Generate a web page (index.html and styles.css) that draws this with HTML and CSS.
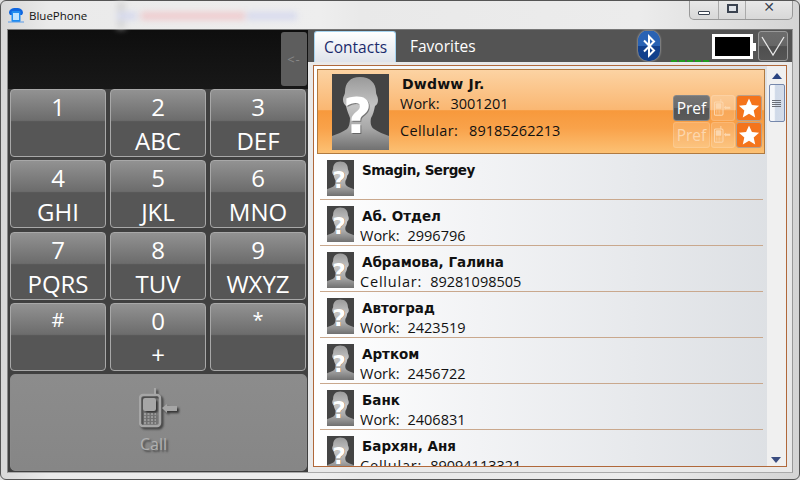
FILE: index.html
```html
<!DOCTYPE html>
<html lang="en">
<head>
<meta charset="utf-8">
<title>BluePhone</title>
<link rel="stylesheet" href="styles.css">
</head>
<body>
<svg class="defs" width="0" height="0">
  <defs>
    <linearGradient id="bust" x1="0" y1="0" x2="0" y2="1">
      <stop offset="0" stop-color="#9a9a9a"/><stop offset=".4" stop-color="#c4c4c4"/><stop offset=".7" stop-color="#a8a8a8"/><stop offset="1" stop-color="#707070"/>
    </linearGradient>
    <filter id="soft" x="-10%" y="-10%" width="120%" height="120%"><feGaussianBlur stdDeviation=".7"/></filter>
    <symbol id="avatar" viewBox="0 0 57 76">
      <rect width="57" height="76" fill="#444"/>
      <path d="M28 3c-10 0-15 6-15 15 0 3-2 4-2 8 0 3 2 5 3 6 1 5 3 9 4 12 0 5-1 9-3 11-4 3-10 5-15 7v14h57V62c-5-2-11-4-15-7-3-2-4-6-3-11 2-3 3-7 4-12 2-1 3-3 3-6 0-4-2-5-2-8 0-9-6-15-16-15z" fill="url(#bust)" filter="url(#soft)"/>
      <text x="26.500" y="60" class="avatar-q-shadow" text-anchor="middle">?</text>
      <text x="25.500" y="59" class="avatar-q" text-anchor="middle">?</text>
    </symbol>
    <symbol id="phone" viewBox="0 0 42 42">
      <path d="M16 0v8" stroke="currentColor" stroke-width="2" fill="none"/>
      <rect x="1" y="7" width="20" height="31" rx="3" fill="none" stroke="currentColor" stroke-width="2.4"/>
      <rect x="4" y="10" width="13" height="13" rx="2" fill="currentColor"/>
      <path d="M5 26h12M5 29h12M5 32h12M5 35h12" stroke="currentColor" stroke-width="1.4" stroke-dasharray="2 1.5"/>
      <path d="M23 20l5-4v2h10v5H28v2z" fill="currentColor"/>
    </symbol>
    <symbol id="star" viewBox="0 0 24 24">
      <path d="M12 1.500l3.200 7.200 7.800.8-5.900 5.200 1.700 7.700L12 18.400l-6.800 4 1.700-7.700L1 9.500l7.800-.8z" fill="#fff"/>
    </symbol>
  </defs>
</svg>
<div class="window">
  <header class="titlebar">
    <div class="title-left">
      <svg class="app-icon" viewBox="0 0 16 16" width="16" height="16"><path d="M1 6c0-3 2-5 7-5s7 2 7 5l-1 2h-2V5H4v3H2z" fill="#0f66e0"/><rect x="3.500" y="4" width="9" height="11" rx="1" fill="#1f8cf0"/><rect x="5" y="6" width="6" height="7" fill="#bfe3ff"/><path d="M0 15h16" stroke="#5a9be8"/></svg>
      <span class="title-text">BluePhone</span>
    </div>
    <div class="bleed" aria-hidden="true"><i class="bleed-shade"></i><i class="bleed-blue"></i><i class="bleed-red"></i><i class="bleed-blue2"></i></div>
    <div class="caption-btns">
      <span class="cap cap-min"><i class="glyph-min"></i></span>
      <span class="cap cap-max"><i class="glyph-max"></i></span>
      <span class="cap cap-close"><span class="glyph-x">✕</span></span>
    </div>
  </header>
  <main class="client">
    <section class="dialer">
      <div class="display"><button class="back">&lt;-</button></div>
      <div class="keys">
        <div class="key"><span class="digit">1</span><span class="letters"></span></div>
        <div class="key"><span class="digit">2</span><span class="letters">ABC</span></div>
        <div class="key"><span class="digit">3</span><span class="letters">DEF</span></div>
        <div class="key"><span class="digit">4</span><span class="letters">GHI</span></div>
        <div class="key"><span class="digit">5</span><span class="letters">JKL</span></div>
        <div class="key"><span class="digit">6</span><span class="letters">MNO</span></div>
        <div class="key"><span class="digit">7</span><span class="letters">PQRS</span></div>
        <div class="key"><span class="digit">8</span><span class="letters">TUV</span></div>
        <div class="key"><span class="digit">9</span><span class="letters">WXYZ</span></div>
        <div class="key"><span class="digit digit-small">#</span><span class="letters"></span></div>
        <div class="key"><span class="digit">0</span><span class="letters">+</span></div>
        <div class="key"><span class="digit digit-small">*</span><span class="letters"></span></div>
      </div>
      <button class="call">
        <svg class="call-icon" width="42" height="42"><use href="#phone"/></svg>
        <span class="call-label">Call</span>
      </button>
    </section>
    <section class="contacts">
      <div class="tabbar">
        <div class="tabs">
          <span class="tab tab-active">Contacts</span>
          <span class="tab">Favorites</span>
        </div>
        <div class="status">
          <svg class="bt" viewBox="0 0 22 30" width="22" height="30"><rect width="22" height="30" rx="10" fill="#12408c"/><path d="M0 15V10A10 10 0 0 1 22 10v5z" fill="#2a63b4"/><path d="M6 9.500l10 10-5 5V5.500l5 5-10 10" stroke="#fff" stroke-width="2" fill="none"/></svg>
          <div class="signal"><i></i><i></i><i></i><i></i><i></i></div>
          <div class="battery"><div class="battery-body"></div><div class="battery-tip"></div></div>
          <button class="chevron"><svg viewBox="0 0 28 28" width="28" height="28"><path d="M3 5l11 18L25 5" stroke="#e8e8e8" stroke-width="1.300" fill="none"/></svg></button>
        </div>
      </div>
      <div class="listbox">
        <div class="rows">
          <article class="row-selected">
            <svg class="avatar-large" width="57" height="76"><use href="#avatar"/></svg>
            <div class="sel-info">
              <div class="sel-name">Dwdww Jr.</div>
              <div class="sel-line"><span>Work:</span><span>3001201</span></div>
              <div class="sel-line"><span class="cell">Cellular:</span><span>89185262213</span></div>
            </div>
            <div class="actions">
              <span class="act act-pref">Pref</span>
              <span class="act act-ghost"><svg width="18" height="18"><use href="#phone"/></svg></span>
              <span class="act act-star"><svg width="22" height="22"><use href="#star"/></svg></span>
              <span class="act act-pref-ghost">Pref</span>
              <span class="act act-ghost"><svg width="18" height="18"><use href="#phone"/></svg></span>
              <span class="act act-star"><svg width="22" height="22"><use href="#star"/></svg></span>
            </div>
          </article>
          <article class="row"><svg class="avatar" width="27" height="36"><use href="#avatar"/></svg><div class="info"><div class="name name-latin">Smagin, Sergey</div></div></article>
          <article class="row"><svg class="avatar" width="27" height="36"><use href="#avatar"/></svg><div class="info"><div class="name">Аб. Отдел</div><div class="line"><span>Work:</span><span>2996796</span></div></div></article>
          <article class="row"><svg class="avatar" width="27" height="36"><use href="#avatar"/></svg><div class="info"><div class="name">Абрамова, Галина</div><div class="line"><span class="cell">Cellular:</span><span>89281098505</span></div></div></article>
          <article class="row"><svg class="avatar" width="27" height="36"><use href="#avatar"/></svg><div class="info"><div class="name">Автоград</div><div class="line"><span>Work:</span><span>2423519</span></div></div></article>
          <article class="row"><svg class="avatar" width="27" height="36"><use href="#avatar"/></svg><div class="info"><div class="name">Артком</div><div class="line"><span>Work:</span><span>2456722</span></div></div></article>
          <article class="row"><svg class="avatar" width="27" height="36"><use href="#avatar"/></svg><div class="info"><div class="name">Банк</div><div class="line"><span>Work:</span><span>2406831</span></div></div></article>
          <article class="row"><svg class="avatar" width="27" height="36"><use href="#avatar"/></svg><div class="info"><div class="name">Бархян, Аня</div><div class="line"><span class="cell">Cellular:</span><span>89094113321</span></div></div></article>
        </div>
        <div class="scrollbar">
          <span class="arrow-up"></span>
          <span class="thumb"><i></i><i></i><i></i><i></i></span>
          <span class="arrow-down"></span>
        </div>
      </div>
    </section>
  </main>
</div>
</body>
</html>
```
FILE: styles.css
```css
* { box-sizing: border-box; }
html, body { margin: 0; padding: 0; }
body { width: 800px; height: 480px; overflow: hidden; background: #ddd; font-family: "Open Sans", "Noto Sans", sans-serif; }
.defs { display: block; height: 0; }
button { font-family: inherit; padding: 0; margin: 0; }

.window {
  width: 800px; height: 480px; display: flex; flex-direction: column;
  border: 1px solid #555; border-radius: 6px 6px 6px 6px;
  background: linear-gradient(90deg, #d8d8d8 0, #eaeaea 6%, #eee 40%, #e9e9e9 45%, #ececec 80%, #d4d4d4 100%);
}
.titlebar { height: 28px; flex: none; display: flex; justify-content: space-between; padding: 0 6px 0 7px; position: relative; }
.title-left { display: flex; align-items: center; gap: 5px; height: 28px; }
.title-text { font: 11.500px "Open Sans", sans-serif; color: #111; }
.app-icon { display: block; }
.bleed { position: absolute; left: 0; top: 0; width: 400px; height: 28px; overflow: hidden; pointer-events: none; filter: blur(3px); opacity: .75; }
.bleed i { position: absolute; display: block; }
.bleed-shade { left: 116px; top: 0; width: 8px; height: 28px; background: #d0d0d0; }
.bleed-blue { left: 116px; top: 11px; width: 20px; height: 8px; background: #d0d4ee; }
.bleed-red { left: 140px; top: 11px; width: 104px; height: 8px; background: #f0c0c4; }
.bleed-blue2 { left: 246px; top: 11px; width: 50px; height: 8px; background: #d0d4ee; }
.caption-btns { display: flex; height: 19px; border: 1px solid #999; border-top: 0; border-radius: 0 0 5px 5px; background: linear-gradient(#e8e8e8, #d8d8d8); }
.cap { height: 18px; display: flex; align-items: center; justify-content: center; border-left: 1px solid #aaa; color: #333; }
.cap-min { width: 28px; border-left: 0; }
.cap-max { width: 27px; }
.cap-close { width: 47px; }
.glyph-min { width: 12px; height: 4px; margin-top: 5px; background: #fff; border: 1px solid #3b4350; border-radius: 1px; }
.glyph-max { width: 11px; height: 9px; margin-top: -4px; background: #dfe3e8; border: 2px solid #3b4350; }
.glyph-x { font: bold 14px "DejaVu Sans", sans-serif; color: #3b4350; text-shadow: 0 0 1px #fff; margin-top: -7px; }

.client { flex: 1; display: flex; margin: 0 6px 6px; min-height: 0; border: 1px solid #777; border-bottom-color: #aaa; border-right-color: #999; border-left-color: #888; }

.dialer { width: 300px; flex: none; background: #404040; display: flex; flex-direction: column; }
.display { height: 59px; flex: none; display: flex; justify-content: flex-end; padding: 2px 1px 0 0; align-items: flex-start; background: linear-gradient(#0e0e0e, #181818); }
.back { width: 26px; height: 54px; border: 0; border-radius: 3px; background: #5d5d5d; color: #888; font-size: 13px; letter-spacing: 1px; }
.keys { display: grid; grid-template-columns: repeat(3, 96px); grid-auto-rows: 68px; column-gap: 4px; row-gap: 3.330px; padding: 0 2px; }
.key {
  border: 1px solid #a8a8a8; border-radius: 4px; color: #fff; display: flex; flex-direction: column; align-items: center;
  background: linear-gradient(#929292 0, #6c6c6c 46%, #565656 48%, #565656 100%);
}
.digit { height: 33px; font-size: 24px; line-height: 33px; }
.digit-small { font-size: 20px; line-height: 31px; }
.letters { height: 33px; font-size: 24px; line-height: 36px; }
.call {
  height: 97px; flex: none; margin: 3px 1px 3px 2px; border: 1px solid #8a8a8a; border-radius: 5px;
  background: linear-gradient(#8c8c8c, #868686); color: #a6a6a6; display: flex; flex-direction: column; align-items: center; padding: 13px 0 0 0;
}
.call-icon { display: block; filter: drop-shadow(2px 2px 1px #333); margin-left: 2px; }
.call-label { font-size: 16px; line-height: 20px; margin: 4px 10px 0 0; color: #b0b0b0; text-shadow: 2px 2px 2px #444; }

.contacts { flex: 1; min-width: 0; display: flex; flex-direction: column; background: #e9e9e9; }
.tabbar { height: 32px; flex: none; background: #545454; display: flex; justify-content: space-between; padding: 1px 4px 0 6px; }
.tabs { display: flex; }
.tab { font-size: 15.500px; line-height: 30px; color: #fff; padding: 0 14px; height: 31px; }
.tab-active { color: #1a2a6c; background: linear-gradient(#fff, #dfe3ea); border: 1px solid #a6d4f0; border-bottom: 0; border-radius: 3px 3px 0 0; padding: 0 9px; width: 82px; }
.status { display: flex; align-items: flex-start; }
.bt { margin-right: 11px; display: block; filter: drop-shadow(0 0 1px #ccc); }
.signal { display: flex; gap: 2px; width: 38px; margin: 29px 3px 0 0; }
.signal i { width: 6px; height: 2px; background: #1f9a1f; }
.battery { display: flex; align-items: center; margin: 3px 2px 0 0; }
.battery-body { width: 41px; height: 25px; background: #000; border: 3px solid #fff; }
.battery-tip { width: 3px; height: 8px; background: #fff; }
.chevron { width: 30px; height: 30px; border: 1px solid #999; border-radius: 3px; background: linear-gradient(#6c6c6c 0, #666 50%, #4f4f4f 52%, #555 100%); display: flex; align-items: center; justify-content: center; }
.chevron svg { display: block; }

.listbox { flex: 1; min-height: 0; margin: 3px 5px 5px 5px; border: 1px solid #b0683a; display: flex; background: linear-gradient(90deg, #fff 0, #f2f3f5 35%, #dcdfe3 100%); }
.rows { flex: 1; min-width: 0; overflow: hidden; padding: 3px 0 0 3px; }
.scrollbar { width: 19px; flex: none; background: #f0f0f0; display: flex; flex-direction: column; align-items: center; position: relative; padding-top: 7px; }
.arrow-up { width: 0; height: 0; border: 5px solid transparent; border-top: 0; border-bottom: 6px solid #2a4480; }
.thumb { width: 16px; height: 38px; margin-top: 5px; border: 1px solid #7587ab; border-radius: 2px; background: linear-gradient(90deg, #f5f7fa 0, #f5f7fa 30%, #cfd9e8 40%, #d4dcea 100%); display: flex; flex-direction: column; align-items: center; justify-content: center; gap: 1px; }
.thumb i { width: 9px; height: 1px; background: #6b6f78; }
.arrow-down { position: absolute; bottom: 3px; left: 4px; width: 0; height: 0; border: 5px solid transparent; border-bottom: 0; border-top: 6px solid #3b4d80; }

.row-selected { height: 85px; width: 448px; display: flex; border: 1px solid #b07a40; background: linear-gradient(#fcd3a3 0, #fab772 48%, #f7993c 49%, #f9a24a 70%, #fcc174 100%); padding: 4px 0 0 14px; position: relative; }
.avatar-large { display: block; flex: none; }
.sel-info { margin-left: 11px; flex: 1; color: #111; }
.sel-name { font: bold 14px/20px "DejaVu Sans", sans-serif; padding: 0 0 0 2px; letter-spacing: .2px; }
.sel-line { font-size: 14.500px; line-height: 20px; display: flex; gap: 11px; }
.sel-line + .sel-line { margin-top: 7px; }
.cell { letter-spacing: .8px; }
.sel-line .cell { letter-spacing: .35px; }
.actions { position: absolute; right: 2px; top: 25px; display: grid; grid-template-columns: 37px 24px 26px; grid-auto-rows: 26px; column-gap: 1px; row-gap: 1px; }
.act { border-radius: 3px; display: flex; align-items: center; justify-content: center; font-size: 15.500px; }
.act-pref { background: linear-gradient(#757575 0, #6a6a6a 50%, #555 52%, #5a5a5a 100%); color: #fff; border: 1px solid #888; }
.act-pref-ghost { color: #fcd7ae; background: rgba(255,255,255,.14); border: 1px solid rgba(255,255,255,.14); }
.act-ghost { background: rgba(255,255,255,.14); border: 1px solid rgba(255,255,255,.14); color: #fcd7ae; }
.act-star { background: #f4741c; border: 1px solid #b9a18b; }
.act svg { display: block; }

.row { height: 46px; width: 443px; margin-left: 3px; padding: 6px 0 0 7px; border-bottom: 1px solid #c9a88d; display: flex; }
.avatar { display: block; flex: none; }
.info { margin-left: 6px; color: #111; min-width: 0; }
.name { font: bold 13.500px/20px "DejaVu Sans", sans-serif; padding-left: 2px; height: 20px; white-space: nowrap; }
.name-latin { letter-spacing: -.5px; }
.line { font-size: 14.500px; line-height: 20px; display: flex; gap: 8px; white-space: nowrap; }
.avatar-q { font: bold 50px "DejaVu Sans", sans-serif; fill: #fff; }
.avatar-q-shadow { font: bold 50px "DejaVu Sans", sans-serif; fill: #333; opacity: .5; }
```
